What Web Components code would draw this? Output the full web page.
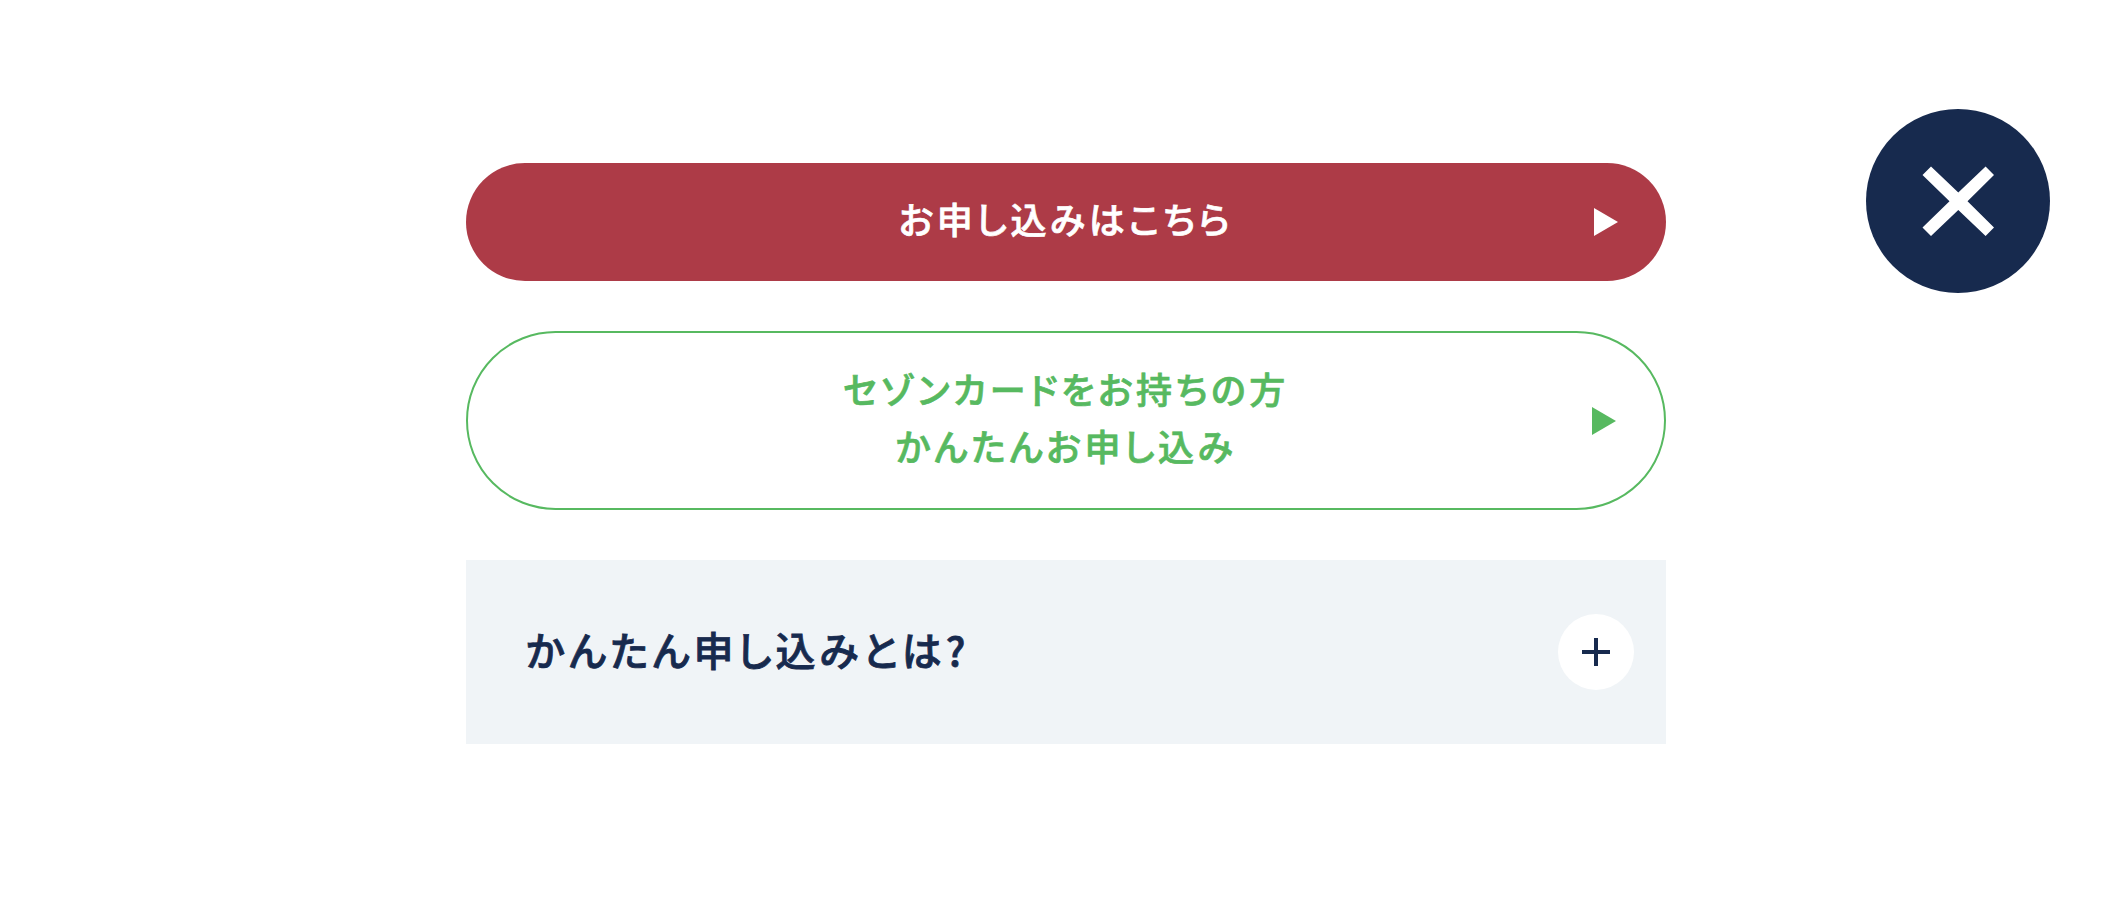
<!DOCTYPE html>
<html lang="ja">
<head>
<meta charset="UTF-8">
<meta name="viewport" content="width=device-width, initial-scale=1">
<title>お申し込み</title>
<style>
    :root {
        --red: #ad3b47;
        --green: #57b960;
        --navy: #172a4e;
        --panel: #f0f4f7;
    }

    body {
        margin: 0;
        background: #fff;
        font-family: "Noto Sans CJK JP", sans-serif;
        font-weight: 500;
        font-feature-settings: "palt";
    }
</style>
</head>
<body>
<apply-section></apply-section>

<script>
class ApplyButton extends HTMLElement {
    constructor() {
        super();
        this.attachShadow({ mode: 'open' });
        this.shadowRoot.innerHTML = `
            <style>
                :host {
                    display: block;
                }

                a {
                    display: grid;
                    grid-template-columns: 1fr auto 1fr;
                    align-items: center;
                    box-sizing: border-box;
                    padding: 27px 48px;
                    border-radius: 90px;
                    background: var(--red);
                    color: #fff;
                    font-size: 36px;
                    line-height: 57px;
                    letter-spacing: 0.1em;
                    text-align: center;
                    text-decoration: none;
                }

                :host([outline]) a {
                    border: 2px solid var(--green);
                    background: #fff;
                    color: var(--green);
                }

                .label {
                    grid-column: 2;
                    padding-bottom: 7px;
                    -webkit-text-stroke: 0.02em currentColor;
                }

                svg {
                    display: block;
                    justify-self: end;
                    fill: currentColor;
                }
            </style>
            <a href="#">
                <span class="label"><slot></slot></span>
                <svg width="24" height="28" viewBox="0 0 24 28" aria-hidden="true"><path d="M0 0L24 14L0 28Z"/></svg>
            </a>
        `;
    }
}

class AccordionPanel extends HTMLElement {
    constructor() {
        super();
        this.attachShadow({ mode: 'open' });
        this.shadowRoot.innerHTML = `
            <style>
                :host {
                    display: block;
                    background: var(--panel);
                }

                button {
                    display: flex;
                    align-items: center;
                    justify-content: space-between;
                    width: 100%;
                    padding: 54px 32px 54px 60px;
                    border: 0;
                    background: none;
                    color: var(--navy);
                    font: inherit;
                    font-size: 40px;
                    line-height: 64px;
                    letter-spacing: 0.1em;
                    font-feature-settings: inherit;
                    text-align: left;
                    cursor: pointer;
                }

                .title {
                    padding-bottom: 7px;
                    -webkit-text-stroke: 0.02em currentColor;
                }

                .icon {
                    display: block;
                    flex: none;
                }

                .body {
                    padding: 0 60px 54px;
                    color: var(--navy);
                }
            </style>
            <button type="button" aria-expanded="false">
                <span class="title"><slot name="title"></slot></span>
                <svg class="icon" width="76" height="76" viewBox="0 0 76 76" aria-hidden="true">
                    <circle cx="38" cy="38" r="38" fill="#fff"/>
                    <path class="bar" d="M38 24V52" stroke="#172a4e" stroke-width="4"/>
                    <path d="M24 38H52" stroke="#172a4e" stroke-width="4"/>
                </svg>
            </button>
            <div class="body" hidden><slot></slot></div>
        `;

        const button = this.shadowRoot.querySelector('button');
        button.addEventListener('click', () => {
            const open = button.getAttribute('aria-expanded') !== 'true';
            button.setAttribute('aria-expanded', open);
            this.shadowRoot.querySelector('.body').hidden = !open;
            this.shadowRoot.querySelector('.bar').style.display = open ? 'none' : '';
        });
    }
}

class CloseButton extends HTMLElement {
    constructor() {
        super();
        this.attachShadow({ mode: 'open' });
        this.shadowRoot.innerHTML = `
            <style>
                :host {
                    display: block;
                }

                button {
                    display: block;
                    padding: 0;
                    border: 0;
                    border-radius: 50%;
                    background: var(--navy);
                    cursor: pointer;
                }

                svg {
                    display: block;
                }
            </style>
            <button type="button" aria-label="閉じる">
                <svg width="184" height="184" viewBox="0 0 184 184" fill="#fff" aria-hidden="true">
                    <path d="M65 57.5L92.3 83.5L119.6 57.5L128 66L101.5 92.3L128 118.5L119.6 127L92.3 101L65 127L56.5 118.5L83.5 92.3L56.5 66Z"/>
                </svg>
            </button>
        `;
    }
}

class ApplySection extends HTMLElement {
    constructor() {
        super();
        this.attachShadow({ mode: 'open' });
        this.shadowRoot.innerHTML = `
            <style>
                :host {
                    display: grid;
                    grid-template-columns: 1fr minmax(0, 1200px) 1fr;
                    align-items: start;
                    padding: 109px 62px 109px 82px;
                }

                .stack {
                    grid-column: 2;
                    display: flex;
                    flex-direction: column;
                    gap: 50px;
                    padding-top: 54px;
                }

                close-button {
                    justify-self: end;
                }
            </style>
            <div class="stack">
                <apply-button>お申し込みはこちら</apply-button>
                <apply-button outline>セゾンカードをお持ちの方<br>かんたんお申し込み</apply-button>
                <accordion-panel><span slot="title">かんたん申し込みとは?</span></accordion-panel>
            </div>
            <close-button></close-button>
        `;
    }
}

customElements.define('apply-button', ApplyButton);
customElements.define('accordion-panel', AccordionPanel);
customElements.define('close-button', CloseButton);
customElements.define('apply-section', ApplySection);
</script>
</body>
</html>
